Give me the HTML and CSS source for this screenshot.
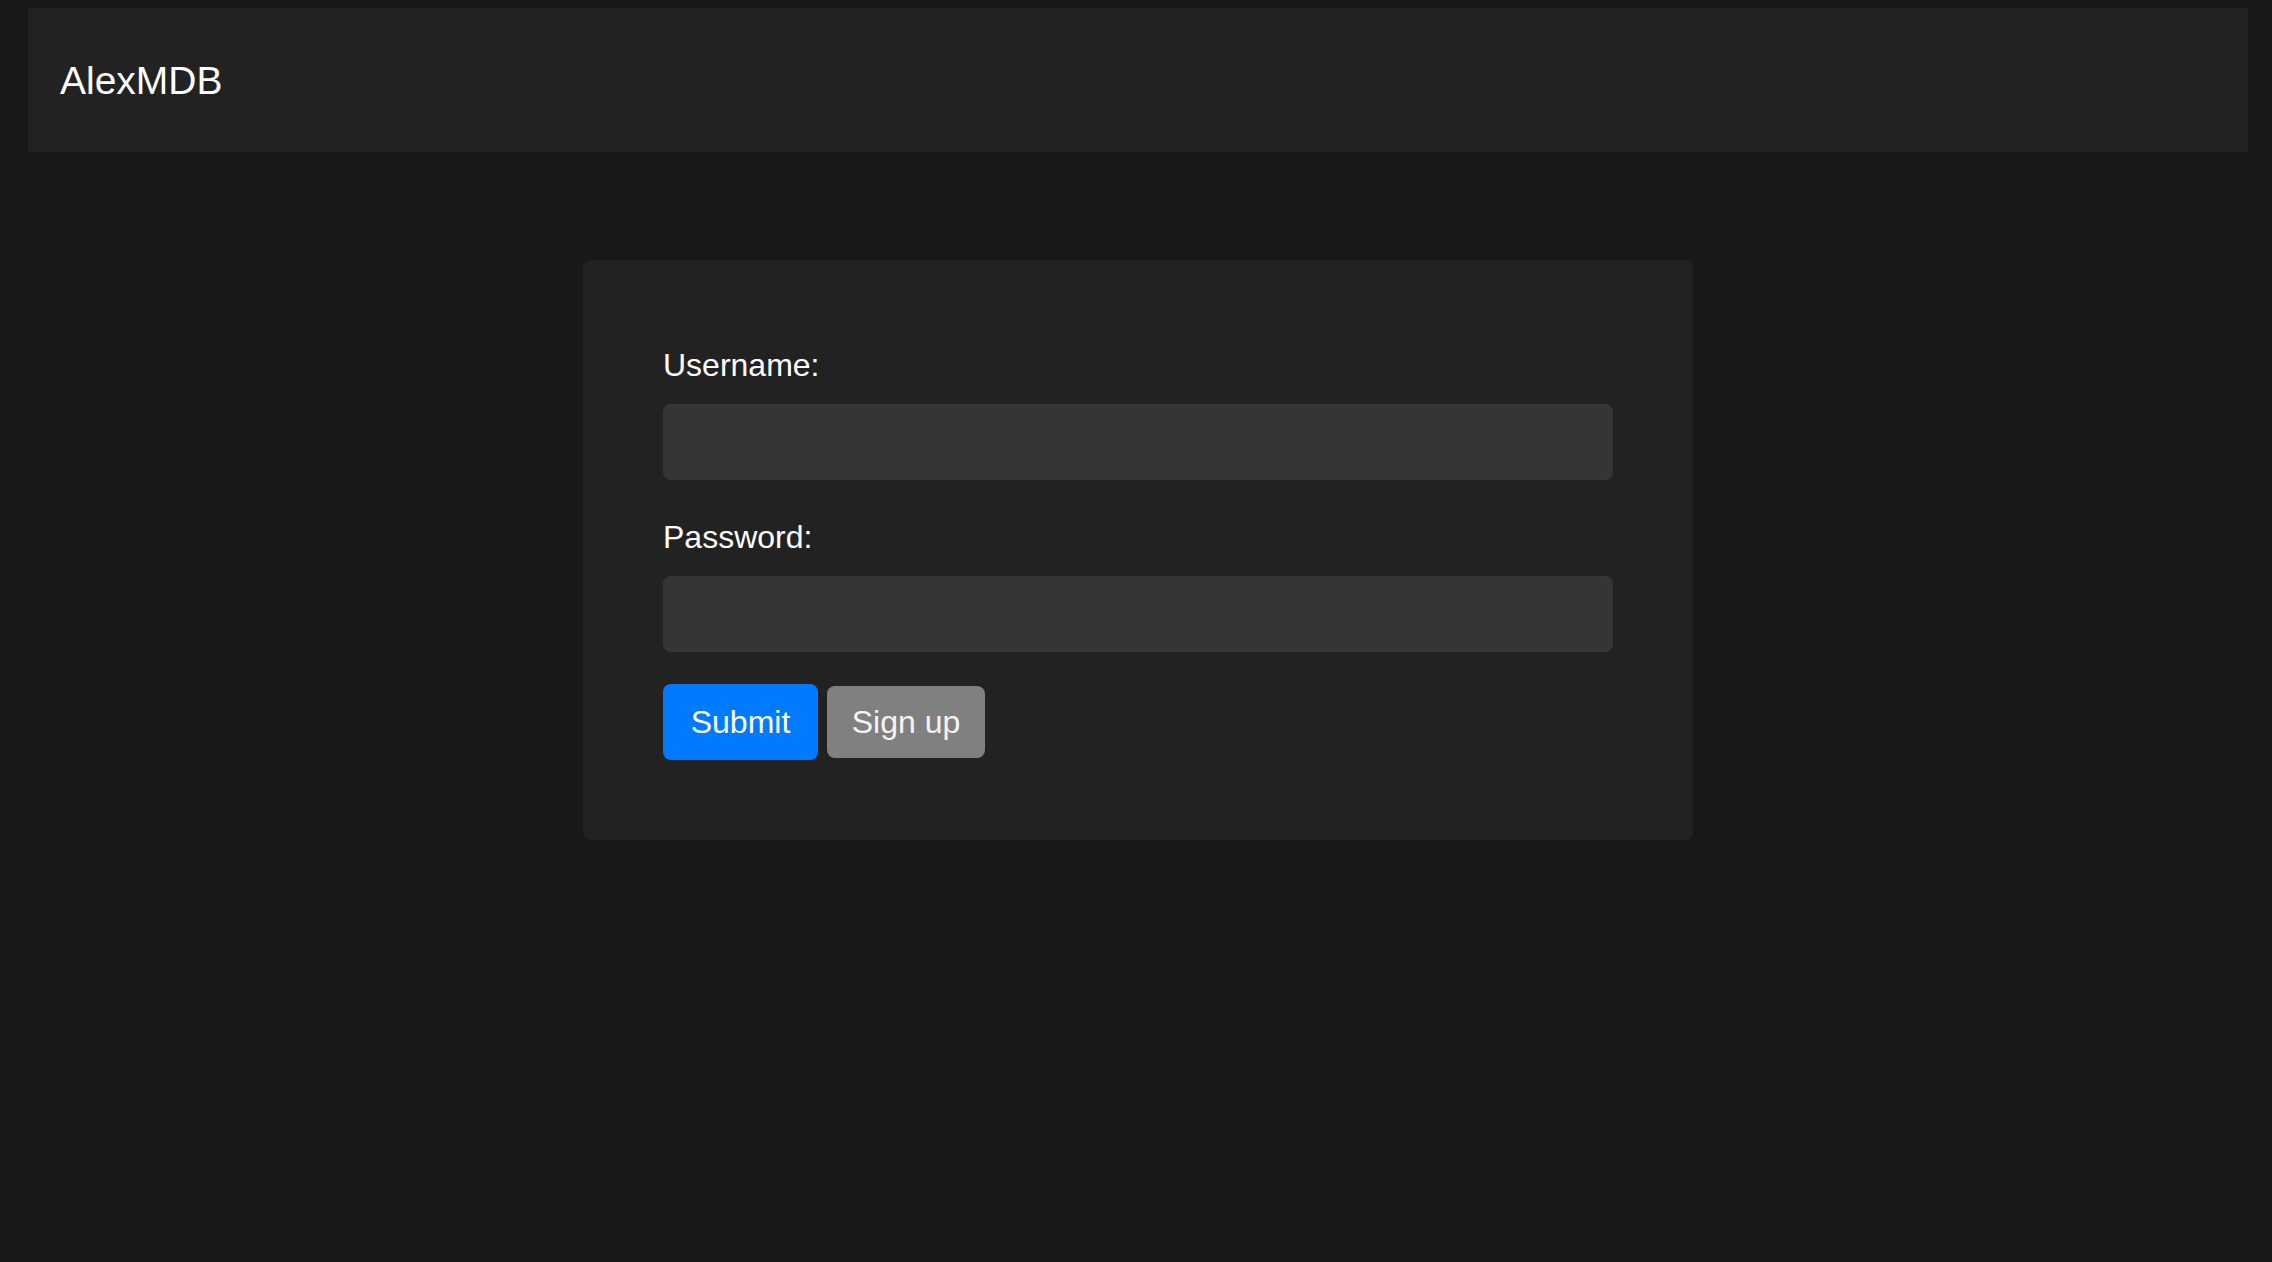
FILE: index.html
```html
<!DOCTYPE html>
<html lang="en">
<head>
<meta charset="utf-8">
<title>AlexMDB</title>
<link rel="stylesheet" href="styles.css">
</head>
<body>
<div class="page">
  <nav class="navbar">
    <a class="brand" href="#">AlexMDB</a>
  </nav>
  <main class="card">
    <form class="login-form">
      <div class="form-group">
        <label class="field-label" for="username">Username:</label>
        <input class="field-input" id="username" type="text">
      </div>
      <div class="form-group">
        <label class="field-label" for="password">Password:</label>
        <input class="field-input" id="password" type="password">
      </div>
      <div class="actions">
        <button class="btn btn-primary" type="button">Submit</button>
        <button class="btn btn-secondary" type="button">Sign up</button>
      </div>
    </form>
  </main>
</div>
</body>
</html>
```
FILE: styles.css
```css
* { box-sizing: border-box; }

html, body {
  margin: 0;
  padding: 0;
  background: #18181a;
  color: #ffffff;
  font-family: "Liberation Sans", Arial, sans-serif;
}

.page {
  padding: 8px 24px 0 28px;
  min-height: 1262px;
}

.navbar {
  height: 144px;
  background: #222222;
  display: flex;
  align-items: center;
  padding: 2px 32px 0;
}

.brand {
  color: #ffffff;
  text-decoration: none;
  font-size: 39px;
  line-height: 60px;
}

.card {
  width: 1110px;
  margin: 108px auto 0;
  background: #222222;
  border-radius: 8px;
  padding: 80px;
}

.form-group {
  margin-bottom: 32px;
}

.field-label {
  display: block;
  font-size: 32px;
  line-height: 48px;
  padding-top: 1px;
  height: 48px;
  margin-bottom: 16px;
  color: #ffffff;
}

.field-input {
  display: block;
  width: 100%;
  height: 76px;
  background: #353535;
  border: none;
  border-radius: 8px;
  color: #ffffff;
  font-size: 32px;
  padding: 0 24px;
  font-family: inherit;
}

.actions {
  display: flex;
  align-items: center;
  gap: 9px;
}

.btn {
  display: flex;
  align-items: center;
  justify-content: center;
  border: none;
  border-radius: 8px;
  color: #ffffff;
  font-family: inherit;
  font-size: 32px;
  padding: 0;
  cursor: pointer;
}

.btn-primary {
  width: 155px;
  height: 76px;
  background: #007bff;
}

.btn-secondary {
  width: 158px;
  height: 72px;
  background: #808080;
  color: #f4f4f4;
}
```
